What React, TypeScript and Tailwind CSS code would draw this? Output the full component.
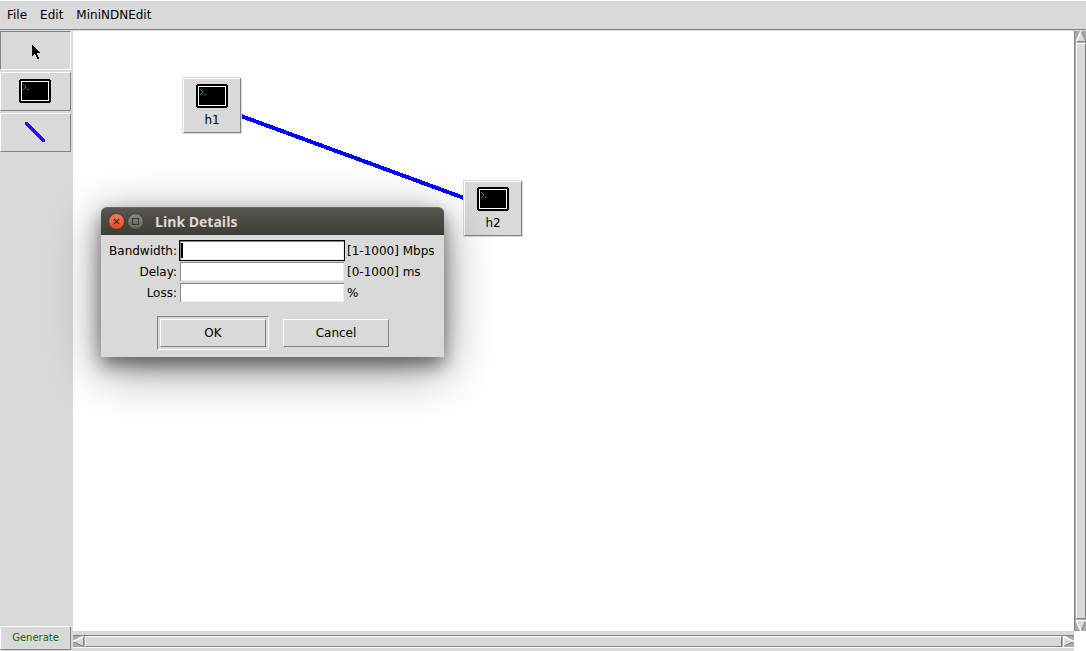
import type { ReactNode } from "react";

const raised =
  "border border-t-white border-l-white border-r-[#828282] border-b-[#828282] bg-[#d9d9d9]";
const sunken =
  "border border-t-[#828282] border-l-[#828282] border-r-white border-b-white bg-[#d9d9d9]";

function TerminalIcon() {
  return (
    <svg width="32" height="24" viewBox="0 0 32 24" shapeRendering="crispEdges" aria-hidden="true">
      <path d="M1 0H31V1H32V23H31V24H1V23H0V1H1Z" fill="#000" />
      <rect x="2.5" y="2.5" width="27" height="19" fill="#000" stroke="#fff" />
      <path
        d="M4 5h1v1h-1zM5 6h1v1h-1zM6 7h1v2h-1zM5 9h1v1h-1zM4 10h1v1h-1zM8 10h2v1h-2z"
        fill="#12a012"
      />
    </svg>
  );
}

function PointerIcon() {
  return (
    <svg width="12" height="20" viewBox="-2 -4 12 20" shapeRendering="crispEdges" aria-hidden="true">
      <path
        d="M1 1h1v1h1v1h1v1h1v1h1v1h1v1h1v1h1v1h-3v2h1v2h1v2h-2v-2h-1v-2h-1v-1h-1v1h-1v1h-1z"
        fill="#000"
      />
    </svg>
  );
}

function LinkIcon() {
  return (
    <svg width="20" height="20" viewBox="0 0 20 20" shapeRendering="crispEdges" aria-hidden="true">
      <path d="M1.5 1.5L18.5 18.5" stroke="#3300ff" strokeWidth="3" strokeLinecap="round" />
    </svg>
  );
}

function Tool({ label, active, children }: { label: string; active?: boolean; children: ReactNode }) {
  return (
    <button
      type="button"
      aria-label={label}
      aria-pressed={!!active}
      className={`flex h-[39px] w-full items-center justify-center pr-px pb-[2px] ${active ? sunken : raised}`}
    >
      {children}
    </button>
  );
}

function HostNode({ name, place }: { name: string; place: string }) {
  return (
    <button type="button" className={`absolute h-[57px] w-[60px] bg-[#d9d9d9] p-px ${place}`}>
      <span className={`flex h-full flex-col items-center pt-[5px] ${raised}`}>
        <TerminalIcon />
        <span className="mt-1 leading-4">{name}</span>
      </span>
    </button>
  );
}

function ArrowBox({ direction }: { direction: "up" | "down" | "left" | "right" }) {
  const arrows = {
    up: { face: "5,0 10,11 0,11", light: "M0 11L5 0", dark: "M5 0L10 10.5H0" },
    down: { face: "0,0 10,0 5,11", light: "M10 0.5H0L5 11", dark: "M5 11L10 0" },
    left: { face: "0,5 11,0 11,11", light: "M0 5.5L11 0", dark: "M10.5 0V10.5L0 5.5" },
    right: { face: "0,0 11,5 0,11", light: "M11 5.5L0.5 0V11", dark: "M0 10.5L11 5.5" },
  };
  const arrow = arrows[direction];
  const upright = direction === "up" || direction === "down";
  return (
    <button type="button" aria-label={`Scroll ${direction}`} className="shrink-0">
      <svg
        width={upright ? 10 : 11}
        height="11"
        viewBox={upright ? "0 0 10 11" : "0 0 11 11"}
        className="block"
      >
        <polygon points={arrow.face} fill="#d9d9d9" />
        <path d={arrow.dark} fill="none" stroke="#828282" />
        <path d={arrow.light} fill="none" stroke="#fff" strokeWidth="1.5" />
      </svg>
    </button>
  );
}

function Field({ id, label, unit, active }: { id: string; label: string; unit: string; active?: boolean }) {
  return (
    <>
      <label htmlFor={id} className="pt-px text-right">
        {label}
      </label>
      <div className="relative h-[21px]">
        <input
          id={id}
          type="text"
          className={`block h-full w-full border bg-white px-1 caret-transparent shadow-[inset_1px_1px_0_#8a8a8a,inset_-1px_-1px_0_#ececec] outline-none ${
            active ? "border-black" : "border-[#d9d9d9]"
          }`}
        />
        {active && <span className="absolute top-[3px] left-[2px] h-[15px] w-[2px] bg-black" />}
      </div>
      <span className="pt-px">{unit}</span>
    </>
  );
}

function LinkDialog() {
  return (
    <div
      role="dialog"
      aria-label="Link Details"
      className="absolute top-[207px] left-[101px] w-[343px] rounded-t-md bg-[#d9d9d9] shadow-[0_8px_18px_rgba(0,0,0,0.45),0_12px_50px_rgba(0,0,0,0.45)]"
    >
      <div className="flex h-7 items-center gap-[2px] rounded-t-md border-t border-[#6a685f] bg-linear-to-b from-[#59574e] to-[#3d3c36] pl-[7px]">
        <button type="button" aria-label="Close">
          <svg width="17" height="17" viewBox="0 0 16 16" className="block">
            <defs>
              <linearGradient id="closeFace" x1="0" y1="0" x2="0" y2="1">
                <stop offset="0" stopColor="#f58160" />
                <stop offset="1" stopColor="#dc4a1c" />
              </linearGradient>
            </defs>
            <circle cx="8" cy="8" r="7.5" fill="url(#closeFace)" stroke="#35342f" strokeWidth="0.8" />
            <path d="M5.5 5.5l5 5M10.5 5.5l-5 5" stroke="#4a2417" strokeWidth="1.1" />
          </svg>
        </button>
        <button type="button" aria-label="Maximize">
          <svg width="17" height="17" viewBox="0 0 16 16" className="block">
            <defs>
              <linearGradient id="maxFace" x1="0" y1="0" x2="0" y2="1">
                <stop offset="0" stopColor="#8b8981" />
                <stop offset="1" stopColor="#65635b" />
              </linearGradient>
            </defs>
            <circle cx="8" cy="8" r="7.5" fill="url(#maxFace)" stroke="#35342f" strokeWidth="0.8" />
            <rect x="5.2" y="5.2" width="5.6" height="5.6" fill="none" stroke="#3b3a35" />
          </svg>
        </button>
        <h2 className="ml-[9px] font-['Open_Sans','Noto_Sans',sans-serif] text-[14px] font-bold text-[#dfdbd2]">
          Link Details
        </h2>
      </div>
      <form className="pt-[5px] pb-[7px]" onSubmit={(event) => event.preventDefault()}>
        <div className="grid auto-rows-[21px] grid-cols-[76px_166px_1fr] items-center gap-x-[2px] leading-5">
          <Field id="bandwidth" label="Bandwidth:" unit="[1-1000] Mbps" active />
          <Field id="delay" label="Delay:" unit="[0-1000] ms" />
          <Field id="loss" label="Loss:" unit="%" />
        </div>
        <div className="mt-[13px] flex items-center justify-center gap-[14px] pl-[1px]">
          <div className={`p-[2px] ${sunken}`}>
            <button type="submit" className={`block h-7 w-[106px] pb-px ${raised}`}>
              OK
            </button>
          </div>
          <button type="button" className={`h-7 w-[106px] pb-px ${raised}`}>
            Cancel
          </button>
        </div>
      </form>
    </div>
  );
}

export default function App() {
  return (
    <div className="relative flex h-screen flex-col overflow-hidden bg-[#d9d9d9] font-['DejaVu_Sans',sans-serif] text-[12px] text-black">
      <nav className="flex h-[30px] shrink-0 items-center gap-[13px] border-t border-t-white border-b border-b-[#828282] px-[7px]">
        <button type="button">File</button>
        <button type="button">Edit</button>
        <button type="button">MiniNDNEdit</button>
      </nav>
      <div className="flex min-h-0 grow pt-px">
        <aside className="flex w-[73px] shrink-0 flex-col gap-[2px] pr-[2px] pb-px">
          <Tool label="Select" active>
            <PointerIcon />
          </Tool>
          <Tool label="Host">
            <TerminalIcon />
          </Tool>
          <Tool label="Link">
            <LinkIcon />
          </Tool>
          <button
            type="button"
            className={`mt-auto h-6 pb-px text-[10px] leading-5 text-[#007000] ${raised}`}
          >
            Generate
          </button>
        </aside>
        <div className="grid min-w-0 grow grid-cols-[1fr_12px] grid-rows-[1fr_20px]">
          <main className="relative overflow-hidden bg-white">
            <svg className="absolute top-0 left-0 h-full w-full" shapeRendering="crispEdges" aria-hidden="true">
              <path d="M168 85L391 167" stroke="#0000ff" strokeWidth="4" />
            </svg>
            <HostNode name="h1" place="left-[109px] top-[46px]" />
            <HostNode name="h2" place="left-[390px] top-[149px]" />
          </main>
          <div className="flex flex-col border-l border-[#828282] bg-[#a9a9a9] pl-px">
            <ArrowBox direction="up" />
            <div className={`my-px grow ${raised}`} />
            <ArrowBox direction="down" />
          </div>
          <div className="pt-1">
            <div className="flex h-[13px] border-t border-b border-t-[#828282] border-b-white bg-[#a9a9a9]">
              <ArrowBox direction="left" />
              <div className={`mx-px grow ${raised}`} />
              <ArrowBox direction="right" />
            </div>
          </div>
          <div className="bg-white" />
        </div>
      </div>
      <LinkDialog />
    </div>
  );
}
